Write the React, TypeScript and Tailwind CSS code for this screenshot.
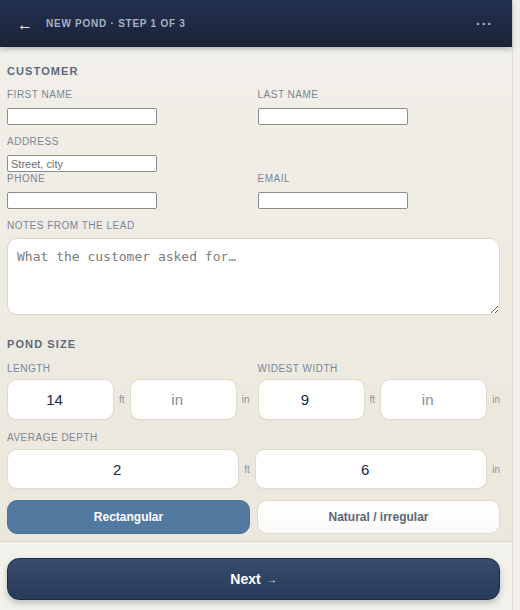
import { useState } from "react";

const labelCls = "block text-[10px] leading-[13px] tracking-[0.05em] text-[#7b8794] uppercase";
const plainInput = "block h-[17px] w-[150px] rounded-[2px] border border-[#8c8c8c] bg-white px-[3px] text-[11px] text-[#333] outline-none placeholder:text-[#6f6f6f]";
const boxInput = "min-w-0 flex-1 rounded-[10px] border border-[#e0dbd0] bg-white pr-[12px] text-center text-[15px] text-[#1c2940] outline-none placeholder:text-[#848c98] shadow-[0_1px_1px_rgba(0,0,0,0.03)]";
const unitCls = "text-[10px] text-[#8a93a0]";

function SectionTitle({ children }: { children: string })
{
  return (
    <h2 className="text-[11px] leading-[16px] font-bold tracking-[0.1em] text-[#5b6b7e] uppercase">
      { children }
    </h2>
  );
}

function MeasureField({ label, ft, inch }: { label: string; ft: string; inch: string })
{
  return (
    <div>
      <label className={ `${ labelCls } mb-[4px]` }>{ label }</label>
      <div className="flex items-center gap-[5px]">
        <input className={ `${ boxInput } h-[41px]` } defaultValue={ ft } />
        <span className={ unitCls }>ft</span>
        <input className={ `${ boxInput } h-[41px]` } defaultValue={ inch } placeholder="in" />
        <span className={ unitCls }>in</span>
      </div>
    </div>
  );
}

export default function App()
{
  const [ shape, setShape ] = useState("rect");

  return (
    <div className="min-h-screen bg-[#f2f0eb] font-['Liberation_Sans',Arial,sans-serif]">
      <div className="w-[513px] border-r border-[#e4e0d6]">
        {/* top bar */ }
        <header className="relative z-10 flex h-[47px] items-center bg-linear-to-b from-[#243151] to-[#1a2237] pl-[17px] pr-[19px] shadow-[0_2px_5px_rgba(0,0,0,0.25)]">
          <button className="mt-[3px] text-[16px] leading-none text-white">←</button>
          <div className="ml-[13px] text-[10px] font-bold tracking-[0.075em] text-[#a7b1c2]">
            NEW POND · STEP 1 OF 3
          </div>
          <button className="ml-auto text-[14px] font-bold leading-none tracking-[1px] text-[#b0b9c9]">···</button>
        </header>

        <main className="bg-linear-to-b from-[#f1efe9] to-[#ebe7dc] pt-[16px] pb-[7px] pl-[7px] pr-[12px]">
          <SectionTitle>Customer</SectionTitle>

          <div className="mt-[9px] grid grid-cols-2 gap-x-[8px]">
            <div className="mb-[10px]">
              <label className={ `${ labelCls } mb-[7px]` }>First name</label>
              <input className={ plainInput } />
            </div>
            <div className="mb-[10px]">
              <label className={ `${ labelCls } mb-[7px]` }>Last name</label>
              <input className={ plainInput } />
            </div>
            <div className="col-span-2">
              <label className={ `${ labelCls } mb-[7px]` }>Address</label>
              <input className={ plainInput } placeholder="Street, city" />
            </div>
            <div className="mb-[10px]">
              <label className={ `${ labelCls } mb-[7px]` }>Phone</label>
              <input className={ plainInput } />
            </div>
            <div className="mb-[10px]">
              <label className={ `${ labelCls } mb-[7px]` }>Email</label>
              <input className={ plainInput } />
            </div>
          </div>

          <label className={ `${ labelCls } mb-[6px]` }>Notes from the lead</label>
          <textarea
            className="block h-[77px] w-full rounded-[10px] border border-[#dcd7cb] bg-white px-[9px] py-[8px] font-['DejaVu_Sans_Mono',monospace] text-[13px] text-[#333] outline-none placeholder:text-[#7c7c7c]"
            placeholder="What the customer asked for…"
          />

          <div className="mt-[21px]">
            <SectionTitle>Pond size</SectionTitle>
          </div>

          <div className="mt-[10px] grid grid-cols-2 gap-x-[8px]">
            <MeasureField label="Length" ft="14" inch="" />
            <MeasureField label="Widest width" ft="9" inch="" />
          </div>

          <label className={ `${ labelCls } mt-[11px] mb-[5px]` }>Average depth</label>
          <div className="flex items-center gap-[5px]">
            <input className={ `${ boxInput } h-[40px]` } defaultValue="2" />
            <span className={ unitCls }>ft</span>
            <input className={ `${ boxInput } h-[40px]` } defaultValue="6" />
            <span className={ unitCls }>in</span>
          </div>

          <div className="mt-[11px] grid grid-cols-2 gap-[7px]">
            <button
              onClick={ () => setShape("rect") }
              className={ shape === "rect"
                ? "h-[34px] rounded-[10px] border border-[#4d7399] bg-[#52799f] text-[12px] font-bold text-white"
                : "h-[34px] rounded-[10px] border border-[#e0dbd0] bg-white text-[12px] font-bold text-[#5c6678]" }
            >
              Rectangular
            </button>
            <button
              onClick={ () => setShape("natural") }
              className={ shape === "natural"
                ? "h-[34px] rounded-[10px] border border-[#4d7399] bg-[#52799f] text-[12px] font-bold text-white"
                : "h-[34px] rounded-[10px] border border-[#e0dbd0] bg-linear-to-b from-white to-[#fafaf8] text-[12px] font-bold text-[#5c6678]" }
            >
              Natural / irregular
            </button>
          </div>
        </main>

        <footer className="border-t border-[#dedad0] bg-[#f3f1ec] pt-[16px] pb-[12px] pl-[7px] pr-[12px]">
          <button className="flex h-[42px] w-full items-center justify-center gap-[6px] rounded-[12px] border border-[#1c2c48] bg-linear-to-b from-[#374d6d] to-[#273a59] text-[14px] font-bold text-white shadow-[0_3px_6px_rgba(0,0,0,0.22)]">
            Next <span className="text-[10px] font-normal">→</span>
          </button>
        </footer>
      </div>
    </div>
  );
}
